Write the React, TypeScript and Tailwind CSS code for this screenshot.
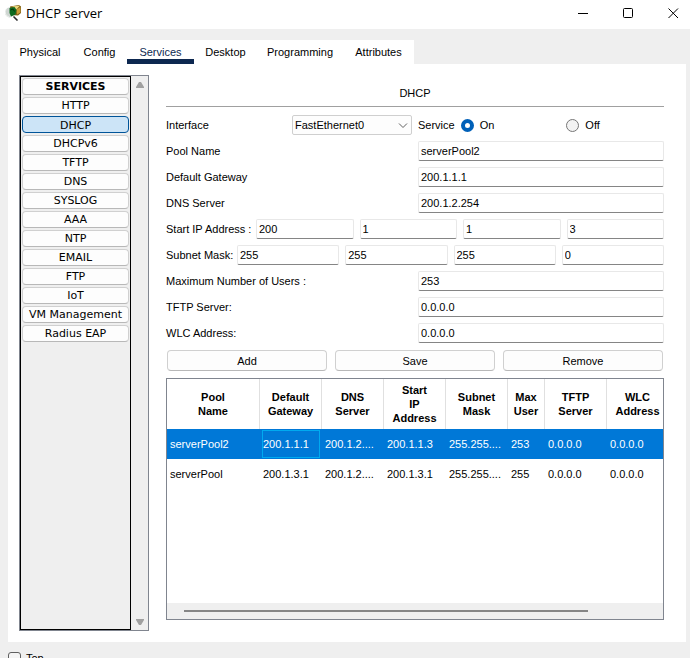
import React, { useState } from 'react'

const TABS = [
  { name: 'Physical', width: 'w-[64px]' },
  { name: 'Config', width: 'w-[55px]' },
  { name: 'Services', width: 'w-[67px]' },
  { name: 'Desktop', width: 'w-[63px]' },
  { name: 'Programming', width: 'w-[86px]' },
  { name: 'Attributes', width: 'w-[71px]' },
]

const SERVICES = [
  'HTTP',
  'DHCP',
  'DHCPv6',
  'TFTP',
  'DNS',
  'SYSLOG',
  'AAA',
  'NTP',
  'EMAIL',
  'FTP',
  'IoT',
  'VM Management',
  'Radius EAP',
]

const COLUMNS = [
  { label: ['Pool', 'Name'], width: 'w-[93px]' },
  { label: ['Default', 'Gateway'], width: 'w-[62px]' },
  { label: ['DNS', 'Server'], width: 'w-[62px]' },
  { label: ['Start', 'IP', 'Address'], width: 'w-[62px]' },
  { label: ['Subnet', 'Mask'], width: 'w-[62px]' },
  { label: ['Max', 'User'], width: 'w-[37px]' },
  { label: ['TFTP', 'Server'], width: 'w-[62px]' },
  { label: ['WLC', 'Address'], width: 'w-[62px]' },
]

const POOLS = [
  ['serverPool2', '200.1.1.1', '200.1.2....', '200.1.1.3', '255.255....', '253', '0.0.0.0', '0.0.0.0'],
  ['serverPool', '200.1.3.1', '200.1.2....', '200.1.3.1', '255.255....', '255', '0.0.0.0', '0.0.0.0'],
]

const inputClass =
  'h-5 w-full min-w-0 rounded-[2px] border border-[#e8e8e8] border-b-[#858585] bg-white px-[2px] outline-none'

const AppIcon: React.FC = () => (
  <svg width="16" height="16" viewBox="0 0 16 16" aria-hidden="true">
    <ellipse cx="4.5" cy="7.5" rx="4.5" ry="5" fill="#cfd6d2" />
    <path d="M1 4.500A5 5 0 0 0 4 12" fill="none" stroke="#eef1ef" />
    <path d="M5 1.500 14 0l2 1.500V8l-3 2.500L6 10z" fill="#7a5c14" />
    <path d="m7 1.500 8-1-3.500 4z" fill="#ecd67c" />
    <path d="m11.500 4.500 4-2.500v5.500L12 9.500z" fill="#c99c38" />
    <path d="m4.500 3 5-1L11.500 5l-1 4.500L6 11.500 4.500 8z" fill="#0c6a20" />
    <path d="M5.500 5 8 4l1.500 2.500" stroke="#04330c" fill="none" />
    <path d="m8.500 11.500 4 4" stroke="#2b2b2b" strokeWidth="1.600" />
  </svg>
)

const TitleBar: React.FC = () => (
  <header className="flex h-[29px] shrink-0 items-center bg-white pr-[11px] pb-[3px] pl-[5px]">
    <AppIcon />
    <h1 className="ml-[5px] flex-1 font-['Open_Sans',sans-serif] text-[13px] leading-4">
      DHCP server
    </h1>
    <div className="flex gap-[34px]">
      <button aria-label="Minimize">
        <svg width="11" height="11" viewBox="0 0 11 11" className="block">
          <path d="M0 5.5h10" stroke="#000" />
        </svg>
      </button>
      <button aria-label="Maximize">
        <svg width="11" height="11" viewBox="0 0 11 11" className="block">
          <rect x=".5" y=".5" width="9" height="9" rx="1" fill="none" stroke="#000" />
        </svg>
      </button>
      <button aria-label="Close">
        <svg width="11" height="11" viewBox="0 0 11 11" className="block">
          <path d="M.5.5 10 10M10 .5.5 10" stroke="#000" />
        </svg>
      </button>
    </div>
  </header>
)

const Sidebar: React.FC = () => {
  const [active, setActive] = useState('DHCP')

  return (
    <aside className="flex w-[130px] shrink-0 border border-[#80858f] bg-[#efefef] font-['DejaVu_Sans',sans-serif] text-[11px] leading-[14px]">
      <nav className="flex flex-1 flex-col gap-[2px] border border-black p-px">
        <button className="h-[17px] rounded-[4px] border border-[#d0d0d0] border-b-[#b8b8b8] bg-[#fdfdfd] pt-px font-bold whitespace-nowrap">
          SERVICES
        </button>
        {SERVICES.map((name) => (
          <button
            key={name}
            onClick={() => setActive(name)}
            className={
              name === active
                ? 'h-[17px] rounded-[4px] border border-[#005499] bg-[#cce4f7] pt-[2px] whitespace-nowrap'
                : 'h-[17px] rounded-[4px] border border-[#d0d0d0] border-b-[#b8b8b8] bg-[#fdfdfd] pt-px whitespace-nowrap'
            }
          >
            {name}
          </button>
        ))}
      </nav>
      <div className="flex w-[17px] flex-col items-center justify-between pt-[6px] pb-[5px]">
        <svg width="8" height="6" viewBox="0 0 8 6">
          <path d="M3 0h2l3 5v1H0V5z" fill="#a0a0a0" />
        </svg>
        <svg width="8" height="6" viewBox="0 0 8 6">
          <path d="M3 6h2l3-5V0H0v1z" fill="#a0a0a0" />
        </svg>
      </div>
    </aside>
  )
}

interface FieldProps {
  id: string
  label: string
  value: string
}

const Field: React.FC<FieldProps> = ({ id, label, value }) => (
  <div className="grid grid-cols-2 items-center gap-[6px]">
    <label htmlFor={id}>{label}</label>
    <input id={id} defaultValue={value} className={inputClass} />
  </div>
)

interface OctetFieldProps {
  label: string
  labelWidth: string
  octets: string[]
}

const OctetField: React.FC<OctetFieldProps> = ({
  label,
  labelWidth,
  octets,
}) => (
  <div role="group" aria-label={label} className="flex items-center gap-[6px]">
    <span className={`${labelWidth} shrink-0 whitespace-nowrap`}>{label}</span>
    {octets.map((octet, idx) => (
      <input
        key={idx}
        aria-label={`${label} ${idx + 1}`}
        defaultValue={octet}
        className={inputClass}
      />
    ))}
  </div>
)

const radioClass =
  'size-[13px] appearance-none rounded-full border border-[#767676] bg-[#f3f3f3] checked:border-4 checked:border-[#0060b8] checked:bg-white'

const InterfaceRow: React.FC = () => (
  <div className="grid grid-cols-2 gap-[6px]">
    <div className="flex items-center justify-between">
      <label htmlFor="interface">Interface</label>
      <div className="relative w-[120px]">
        <select
          id="interface"
          className="block h-5 w-full appearance-none rounded-[2px] border border-[#cfcfcf] bg-[#fdfdfd] pr-5 pl-[2px]"
        >
          <option>FastEthernet0</option>
        </select>
        <svg
          width="10"
          height="6"
          viewBox="0 0 10 6"
          className="pointer-events-none absolute top-2 right-1"
        >
          <path d="m1 .5 4 4 4-4" fill="none" stroke="#606060" />
        </svg>
      </div>
    </div>
    <div className="flex items-center gap-[6px]">
      <span>Service</span>
      <div className="grid flex-1 grid-cols-2 gap-2">
        <label className="flex items-center gap-[6px]">
          <input type="radio" name="service" defaultChecked className={radioClass} />
          On
        </label>
        <label className="flex items-center gap-[6px]">
          <input type="radio" name="service" className={radioClass} />
          Off
        </label>
      </div>
    </div>
  </div>
)

const PoolTable: React.FC = () => (
  <div className="flex min-h-0 flex-1 flex-col border border-[#80858f]">
    <div className="min-h-0 flex-1 overflow-hidden">
      <table className="w-full min-w-[502px] table-fixed border-separate border-spacing-0">
        <thead>
          <tr className="h-[50px]">
            {COLUMNS.map((col, idx) => (
              <th
                key={idx}
                className={`${col.width} border-r border-[#e0e0e0] p-0 text-center leading-[14px] font-bold`}
              >
                {col.label.map((line) => (
                  <div key={line}>{line}</div>
                ))}
              </th>
            ))}
          </tr>
        </thead>
        <tbody>
          {POOLS.map((pool, row) => (
            <tr
              key={pool[0]}
              className={row === 0 ? 'h-[30px] bg-[#0078d7] text-white' : 'h-[30px]'}
            >
              {pool.map((cell, idx) => (
                <td key={idx} className="px-[2px] py-px">
                  <div
                    className={
                      row === 0 && idx === 1
                        ? 'flex h-7 items-center border border-[#00aaf0] whitespace-nowrap'
                        : 'flex h-7 items-center pl-px whitespace-nowrap'
                    }
                  >
                    {cell}
                  </div>
                </td>
              ))}
            </tr>
          ))}
        </tbody>
      </table>
    </div>
    <div className="flex h-4 shrink-0 items-center bg-[#efefef] px-[17px]">
      <div className="h-[2px] w-7/8 bg-[#868686]" />
    </div>
  </div>
)

const DhcpPanel: React.FC = () => (
  <section className="flex min-w-0 flex-1 flex-col pb-[11px]">
    <h2 className="border-b border-[#a0a0a0] pt-3 pb-[7px] text-center leading-3">
      DHCP
    </h2>
    <div className="flex flex-col gap-[6px] pt-2">
      <InterfaceRow />
      <Field id="pool-name" label="Pool Name" value="serverPool2" />
      <Field id="gateway" label="Default Gateway" value="200.1.1.1" />
      <Field id="dns" label="DNS Server" value="200.1.2.254" />
      <OctetField
        label="Start IP Address :"
        labelWidth="w-[84px]"
        octets={['200', '1', '1', '3']}
      />
      <OctetField
        label="Subnet Mask:"
        labelWidth="w-[65px]"
        octets={['255', '255', '255', '0']}
      />
      <Field id="max-users" label="Maximum Number of Users :" value="253" />
      <Field id="tftp" label="TFTP Server:" value="0.0.0.0" />
      <Field id="wlc" label="WLC Address:" value="0.0.0.0" />
    </div>
    <div className="grid grid-cols-3 gap-2 px-px py-[7px]">
      {['Add', 'Save', 'Remove'].map((action) => (
        <button
          key={action}
          className="h-[21px] rounded-[4px] border border-[#d0d0d0] border-b-[#b8b8b8] bg-[#fdfdfd]"
        >
          {action}
        </button>
      ))}
    </div>
    <PoolTable />
  </section>
)

export default function App() {
  const [tab, setTab] = useState('Services')

  return (
    <div className="flex h-screen flex-col overflow-hidden bg-[#efefef] font-['Liberation_Sans',Arial,sans-serif] text-[11px] leading-[14px] text-black">
      <TitleBar />
      <main className="flex min-h-0 flex-1 flex-col pt-[11px] pr-1 pl-2">
        <div className="flex h-6 shrink-0 self-start bg-white">
          {TABS.map(({ name, width }) => (
            <button
              key={name}
              onClick={() => setTab(name)}
              className={`${width} border-b-[5px] pt-[5px] ${
                name === tab
                  ? 'border-[#0d2850] text-[#0d2850]'
                  : 'border-transparent'
              }`}
            >
              {name}
            </button>
          ))}
        </div>
        <div className="flex min-h-0 flex-1 gap-[17px] bg-white py-[11px] pr-[22px] pl-[11px]">
          <Sidebar />
          <DhcpPanel />
        </div>
      </main>
      <footer className="h-4 shrink-0 overflow-hidden pt-[9px] pl-2">
        <label className="flex items-center gap-[5px]">
          <input
            type="checkbox"
            className="size-[13px] shrink-0 appearance-none rounded-[3px] border border-[#606060] bg-[#f5f5f5]"
          />
          Top
        </label>
      </footer>
    </div>
  )
}
